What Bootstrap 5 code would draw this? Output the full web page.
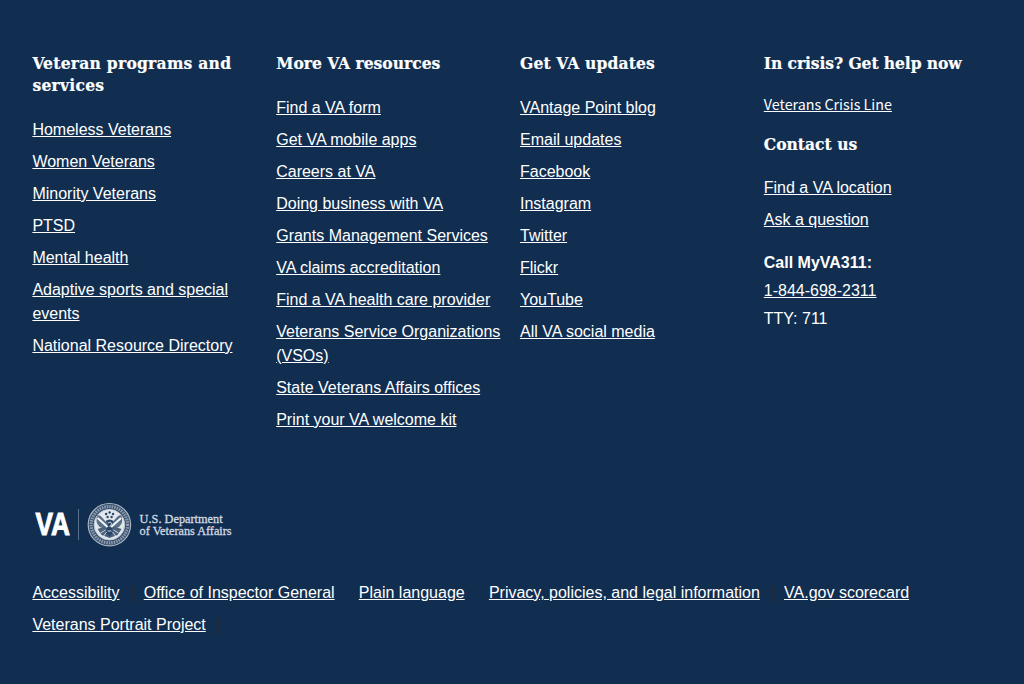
<!DOCTYPE html>
<html lang="en">
<head>
<meta charset="utf-8">
<meta name="viewport" content="width=device-width, initial-scale=1">
<title>VA footer</title>
<link href="https://cdn.jsdelivr.net/npm/bootstrap@5.3.0/dist/css/bootstrap.min.css" rel="stylesheet">
<style>
body { background: #112e51; color: #fff; font: 16px/24px "Liberation Sans", Arial, sans-serif; min-height: 100vh; }
a { color: #fff; text-decoration: underline; }
.site-footer { padding: 52px 24.4px 0; }
.link-columns { min-height: 450px; --bs-gutter-x: 16px; margin: 0; }
.foot-title { font: bold 17.3px/22px "DejaVu Serif Condensed", "DejaVu Serif", serif; margin: 0 0 22px; white-space: nowrap; -webkit-text-stroke: .2px #fff; }
.title-wide { letter-spacing: .25px; }
.title-mid { letter-spacing: .15px; }
.title-tight { letter-spacing: -.08px; }
.link-list li { margin-bottom: 8px; }
.crisis { font: 14.3px/24px "Noto Sans CJK SC", sans-serif; margin: 18px 0 17px; }
.contact-title { margin-bottom: 21px; }
.contact-list { margin-bottom: 17px; }
.phone-block { line-height: 28px; }
.legal { padding-top: 33px; }
.legal li { margin: 0 24.2px 8px 0; position: relative; }
.legal li::after { content: ""; position: absolute; right: -13px; top: 5px; width: 1px; height: 16px; background: #262b33; }
</style>
</head>
<body>
<footer class="site-footer">
  <div class="row link-columns">
    <div class="col-3">
      <h2 class="foot-title title-wide">Veteran programs and<br>services</h2>
      <ul class="list-unstyled link-list mb-0">
        <li><a href="#">Homeless Veterans</a></li>
        <li><a href="#">Women Veterans</a></li>
        <li><a href="#">Minority Veterans</a></li>
        <li><a href="#">PTSD</a></li>
        <li><a href="#">Mental health</a></li>
        <li><a href="#">Adaptive sports and special events</a></li>
        <li><a href="#">National Resource Directory</a></li>
      </ul>
    </div>
    <div class="col-3">
      <h2 class="foot-title">More VA resources</h2>
      <ul class="list-unstyled link-list mb-0">
        <li><a href="#">Find a VA form</a></li>
        <li><a href="#">Get VA mobile apps</a></li>
        <li><a href="#">Careers at VA</a></li>
        <li><a href="#">Doing business with VA</a></li>
        <li><a href="#">Grants Management Services</a></li>
        <li><a href="#">VA claims accreditation</a></li>
        <li><a href="#">Find a VA health care provider</a></li>
        <li><a href="#">Veterans Service Organizations (VSOs)</a></li>
        <li><a href="#">State Veterans Affairs offices</a></li>
        <li><a href="#">Print your VA welcome kit</a></li>
      </ul>
    </div>
    <div class="col-3">
      <h2 class="foot-title title-mid">Get VA updates</h2>
      <ul class="list-unstyled link-list mb-0">
        <li><a href="#">VAntage Point blog</a></li>
        <li><a href="#">Email updates</a></li>
        <li><a href="#">Facebook</a></li>
        <li><a href="#">Instagram</a></li>
        <li><a href="#">Twitter</a></li>
        <li><a href="#">Flickr</a></li>
        <li><a href="#">YouTube</a></li>
        <li><a href="#">All VA social media</a></li>
      </ul>
    </div>
    <div class="col-3">
      <h2 class="foot-title title-tight mb-0">In crisis? Get help now</h2>
      <p class="crisis"><a href="#">Veterans Crisis Line</a></p>
      <h2 class="foot-title contact-title">Contact us</h2>
      <ul class="list-unstyled link-list contact-list">
        <li><a href="#">Find a VA location</a></li>
        <li><a href="#">Ask a question</a></li>
      </ul>
      <div class="phone-block">
        <div class="fw-bold">Call MyVA311:</div>
        <div><a href="#">1-844-698-2311</a></div>
        <div>TTY: 711</div>
      </div>
    </div>
  </div>
  <div class="px-2">
    <svg class="d-block" width="204" height="46" viewBox="32.4 502 204 46" role="img" aria-label="U.S. Department of Veterans Affairs">
      <text transform="translate(35.800 534.600) scale(.86 1)" font-family="Liberation Sans" font-weight="700" font-size="30.500" fill="#fff" stroke="#fff" stroke-width="1">VA</text>
      <path d="M78.900 509v31" stroke="#5b708a" stroke-width="1"/>
      <g fill="none">
        <circle cx="109.8" cy="524.7" r="21.2" fill="#354e6c" stroke="#a9b5c3" stroke-width="1.2"/>
        <circle cx="109.8" cy="524.7" r="18.2" stroke="#8b9aac" stroke-width="3.2" stroke-dasharray="1.6 .9"/>
        <circle cx="109.8" cy="524.7" r="15.3" fill="#e2e7ec" stroke="#c3ccd6" stroke-width="1"/>
        <path d="M98 515q3 0 5 3l6 7-3 4-6-2q-5-5-2-12zM121.500 515q-3 0-5 3l-6 7 3 4 6-2q5-5 2-12z" fill="#5a7089"/>
        <path d="M98 529l9-3 3 3 3-3 9 3-4 6-8 3-8-3z" fill="#4b627d"/>
        <path d="M106 521q4-3 8 0l-2 4 1 8-3 4-4-4 2-8z" fill="#284466"/>
        <path d="M98 518l10 9M121.500 518l-10 9" stroke="#f4f6f8" stroke-width="2"/>
        <path d="M101 533l5-3M119 533l-5-3M104 536l3-4M116 536l-3-4M108 523l3-1 1 2-2 3M108 531h4" stroke="#c7d0d9" stroke-width="1"/>
        <g fill="#294668"><circle cx="106.500" cy="514" r="1.200"/><circle cx="110" cy="512.500" r="1.200"/><circle cx="113.500" cy="514" r="1.200"/><circle cx="108" cy="517" r="1.200"/><circle cx="112" cy="517" r="1.200"/></g>
      </g>
      <g font-family="Liberation Serif" font-size="12.5" fill="#d3dae1" stroke="#d3dae1" stroke-width=".3">
        <text x="140" y="522.700" textLength="83" lengthAdjust="spacingAndGlyphs">U.S. Department</text>
        <text x="140" y="535" textLength="92" lengthAdjust="spacingAndGlyphs">of Veterans Affairs</text>
      </g>
    </svg>
    <ul class="list-unstyled legal d-flex flex-wrap mb-0">
      <li><a href="#">Accessibility</a></li>
      <li><a href="#">Office of Inspector General</a></li>
      <li><a href="#">Plain language</a></li>
      <li><a href="#">Privacy, policies, and legal information</a></li>
      <li><a href="#">VA.gov scorecard</a></li>
      <li><a href="#">Veterans Portrait Project</a></li>
    </ul>
  </div>
</footer>
<script src="https://cdn.jsdelivr.net/npm/bootstrap@5.3.0/dist/js/bootstrap.bundle.min.js"></script>
</body>
</html>
